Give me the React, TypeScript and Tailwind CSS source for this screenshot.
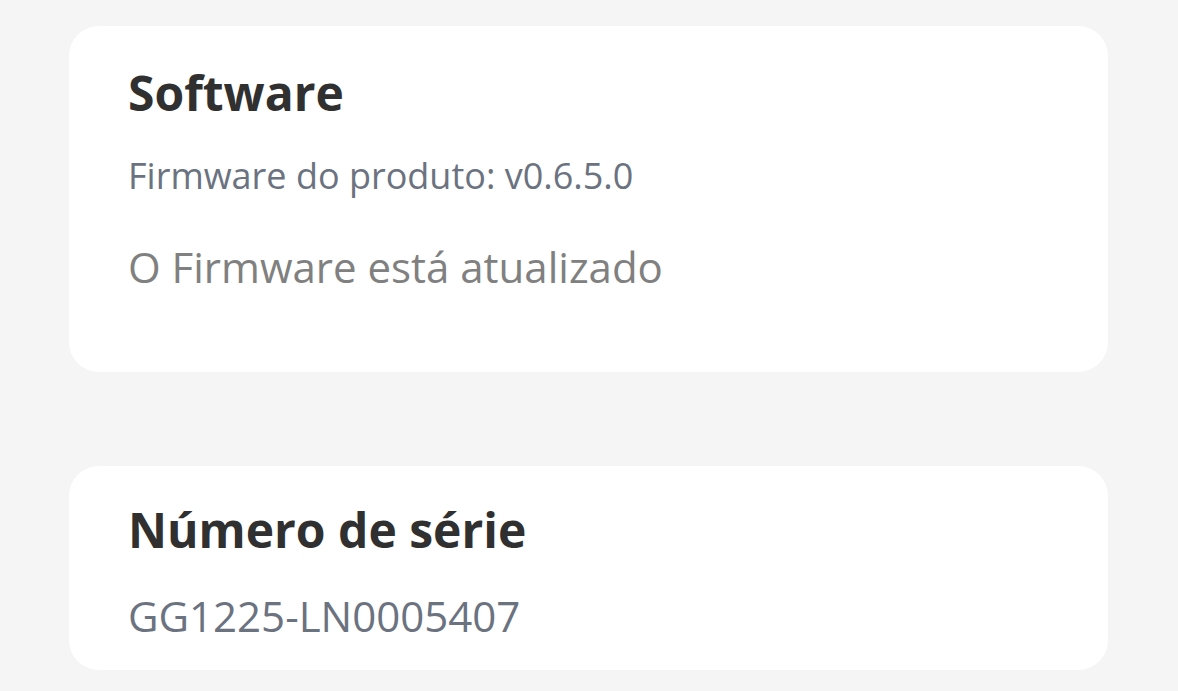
export default function App() {
  return (
    <div
      className="min-h-[691px] w-full bg-[#f5f5f5] pt-[26px] pl-[69px]"
      style={{ fontFamily: '"Open Sans", "Noto Sans", sans-serif' }}
    >
      <div className="flex w-[1039px] flex-col gap-[94px]">
        <section className="h-[346px] rounded-[30px] bg-white pt-[38px] pl-[59px]">
          <h2 className="text-[48px] leading-[58px] font-bold text-[#303030]">Software</h2>
          <p className="mt-[31px] text-[36px] leading-[46px] text-[#6b7280]">
            Firmware do produto: v0.6.5.0
          </p>
          <p className="mt-[41px] text-[42px] leading-[54px] text-[#808080]">
            O Firmware está atualizado
          </p>
        </section>

        <section className="h-[204px] rounded-[30px] bg-white pt-[35px] pl-[59px]">
          <h2 className="text-[48px] leading-[58px] font-bold text-[#303030]">Número de série</h2>
          <p className="mt-[30px] text-[42px] leading-[54px] text-[#6b7280]">GG1225-LN0005407</p>
        </section>
      </div>
    </div>
  );
}
